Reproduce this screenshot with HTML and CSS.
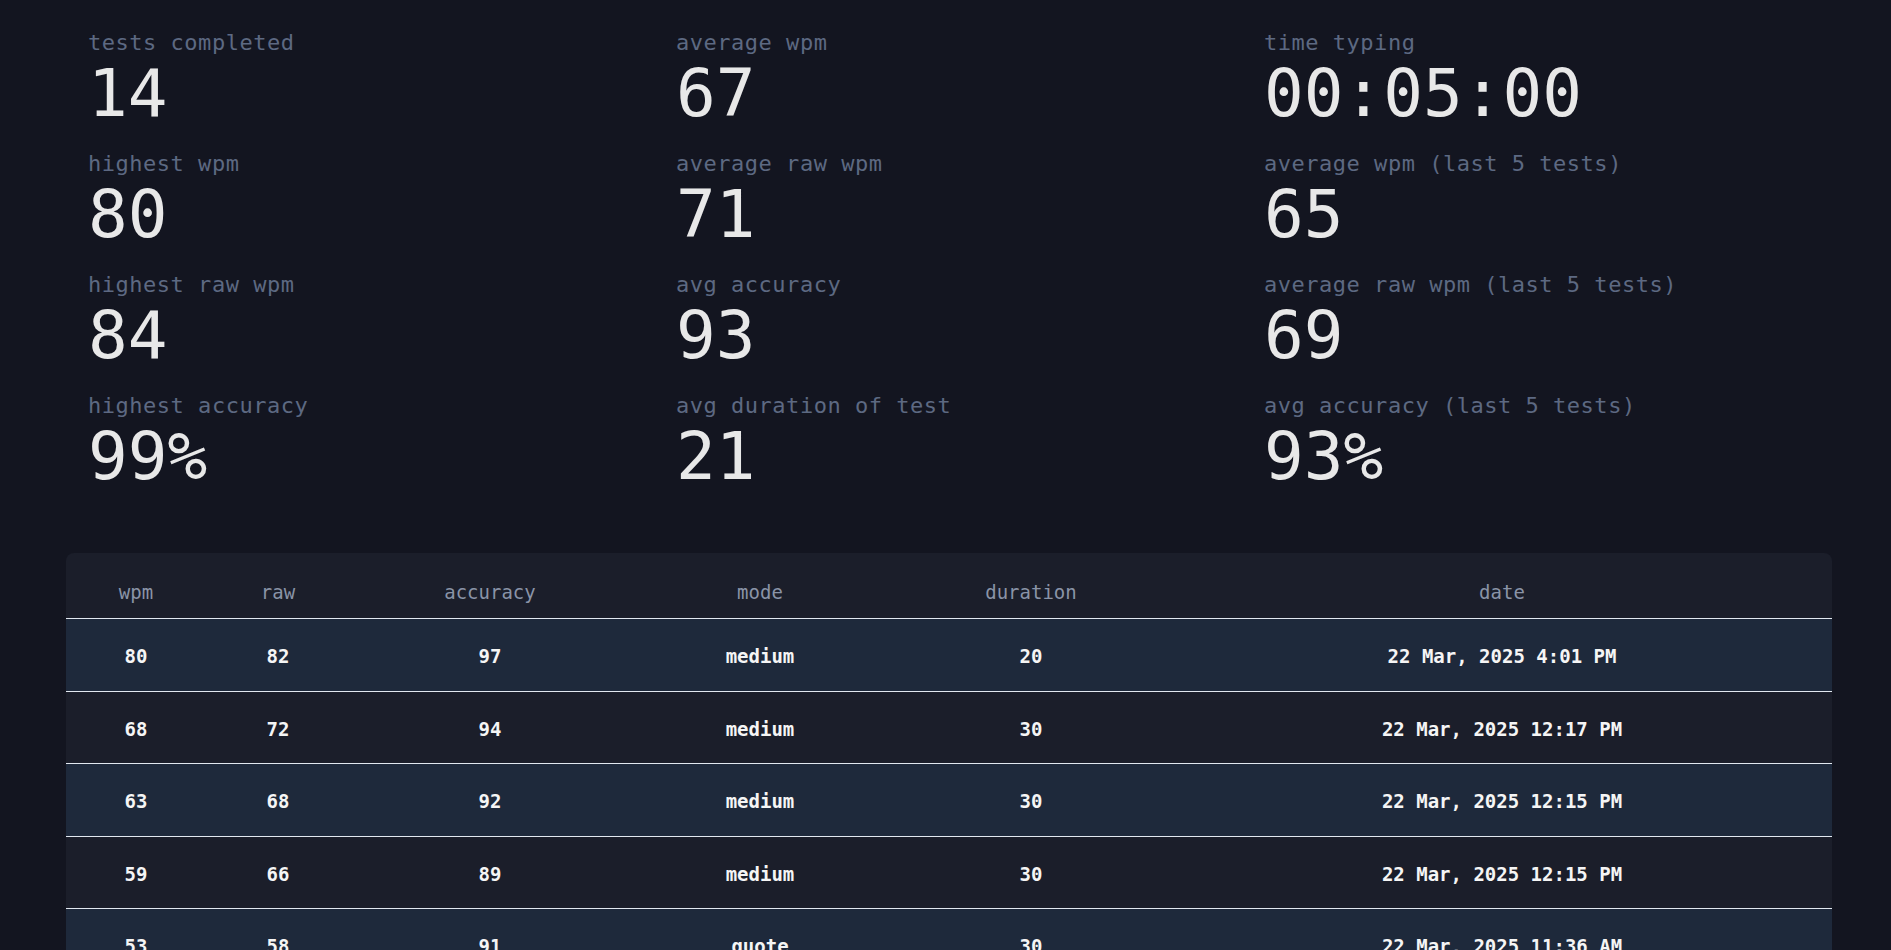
FILE: index.html
```html
<!DOCTYPE html>
<html lang="en">
<head>
<meta charset="utf-8">
<title>Stats</title>
<link rel="stylesheet" href="styles.css">
</head>
<body>
<main class="page">
  <section class="stats">
    <div class="stat"><div class="label">tests completed</div><div class="value">14</div></div>
    <div class="stat"><div class="label">average wpm</div><div class="value">67</div></div>
    <div class="stat"><div class="label">time typing</div><div class="value">00:05:00</div></div>
    <div class="stat"><div class="label">highest wpm</div><div class="value">80</div></div>
    <div class="stat"><div class="label">average raw wpm</div><div class="value">71</div></div>
    <div class="stat"><div class="label">average wpm (last 5 tests)</div><div class="value">65</div></div>
    <div class="stat"><div class="label">highest raw wpm</div><div class="value">84</div></div>
    <div class="stat"><div class="label">avg accuracy</div><div class="value">93</div></div>
    <div class="stat"><div class="label">average raw wpm (last 5 tests)</div><div class="value">69</div></div>
    <div class="stat"><div class="label">highest accuracy</div><div class="value">99%</div></div>
    <div class="stat"><div class="label">avg duration of test</div><div class="value">21</div></div>
    <div class="stat"><div class="label">avg accuracy (last 5 tests)</div><div class="value">93%</div></div>
  </section>

  <section class="history">
    <table class="results">
      <colgroup>
        <col class="c-wpm"><col class="c-raw"><col class="c-acc"><col class="c-mode"><col class="c-dur"><col class="c-date">
      </colgroup>
      <thead>
        <tr><th>wpm</th><th>raw</th><th>accuracy</th><th>mode</th><th>duration</th><th>date</th></tr>
      </thead>
      <tbody>
        <tr class="alt"><td>80</td><td>82</td><td>97</td><td>medium</td><td>20</td><td>22 Mar, 2025 4:01 PM</td></tr>
        <tr><td>68</td><td>72</td><td>94</td><td>medium</td><td>30</td><td>22 Mar, 2025 12:17 PM</td></tr>
        <tr class="alt"><td>63</td><td>68</td><td>92</td><td>medium</td><td>30</td><td>22 Mar, 2025 12:15 PM</td></tr>
        <tr><td>59</td><td>66</td><td>89</td><td>medium</td><td>30</td><td>22 Mar, 2025 12:15 PM</td></tr>
        <tr class="alt"><td>53</td><td>58</td><td>91</td><td>quote</td><td>30</td><td>22 Mar, 2025 11:36 AM</td></tr>
      </tbody>
    </table>
  </section>
</main>
</body>
</html>
```

FILE: styles.css
```css
html, body {
  margin: 0;
  padding: 0;
  background: #131520;
}

body {
  font-family: "DejaVu Sans Mono", "Liberation Mono", monospace;
  color: #e6e6e6;
  overflow: hidden;
}

.page {
  padding: 29px 59px 0 66px;
}

.stats {
  display: grid;
  grid-template-columns: repeat(3, 1fr);
  column-gap: 43px;
  row-gap: 23px;
  padding: 0 23px 0 22px;
}

.stat {
  display: flex;
  flex-direction: column;
  gap: 4px;
}

.label {
  font-size: 22px;
  line-height: 28px;
  letter-spacing: 0.52px;
  color: #5d6982;
}

.value {
  font-size: 66px;
  line-height: 66px;
  color: #e8e8e8;
}

.history {
  margin-top: 63px;
}

.results {
  width: 100%;
  table-layout: fixed;
  border-collapse: collapse;
  background: #1b1e2a;
  border-radius: 8px 8px 0 0;
  overflow: hidden;
}

.c-wpm { width: 140px; }
.c-raw { width: 144px; }
.c-acc { width: 280px; }
.c-mode { width: 260px; }
.c-dur { width: 282px; }
.c-date { width: auto; }

.results th {
  font-size: 19px;
  font-weight: normal;
  line-height: 25px;
  color: #8a94a7;
  padding: 27px 0 13px;
  text-align: center;
  border-bottom: 1px solid #e2e8f0;
}

.results td {
  font-size: 19px;
  font-weight: bold;
  line-height: 25px;
  color: #f5f5f5;
  padding: 25px 0 21.5px;
  text-align: center;
  border-bottom: 1px solid #e2e8f0;
}

.results tr.alt td {
  background: #1e293b;
}
```
